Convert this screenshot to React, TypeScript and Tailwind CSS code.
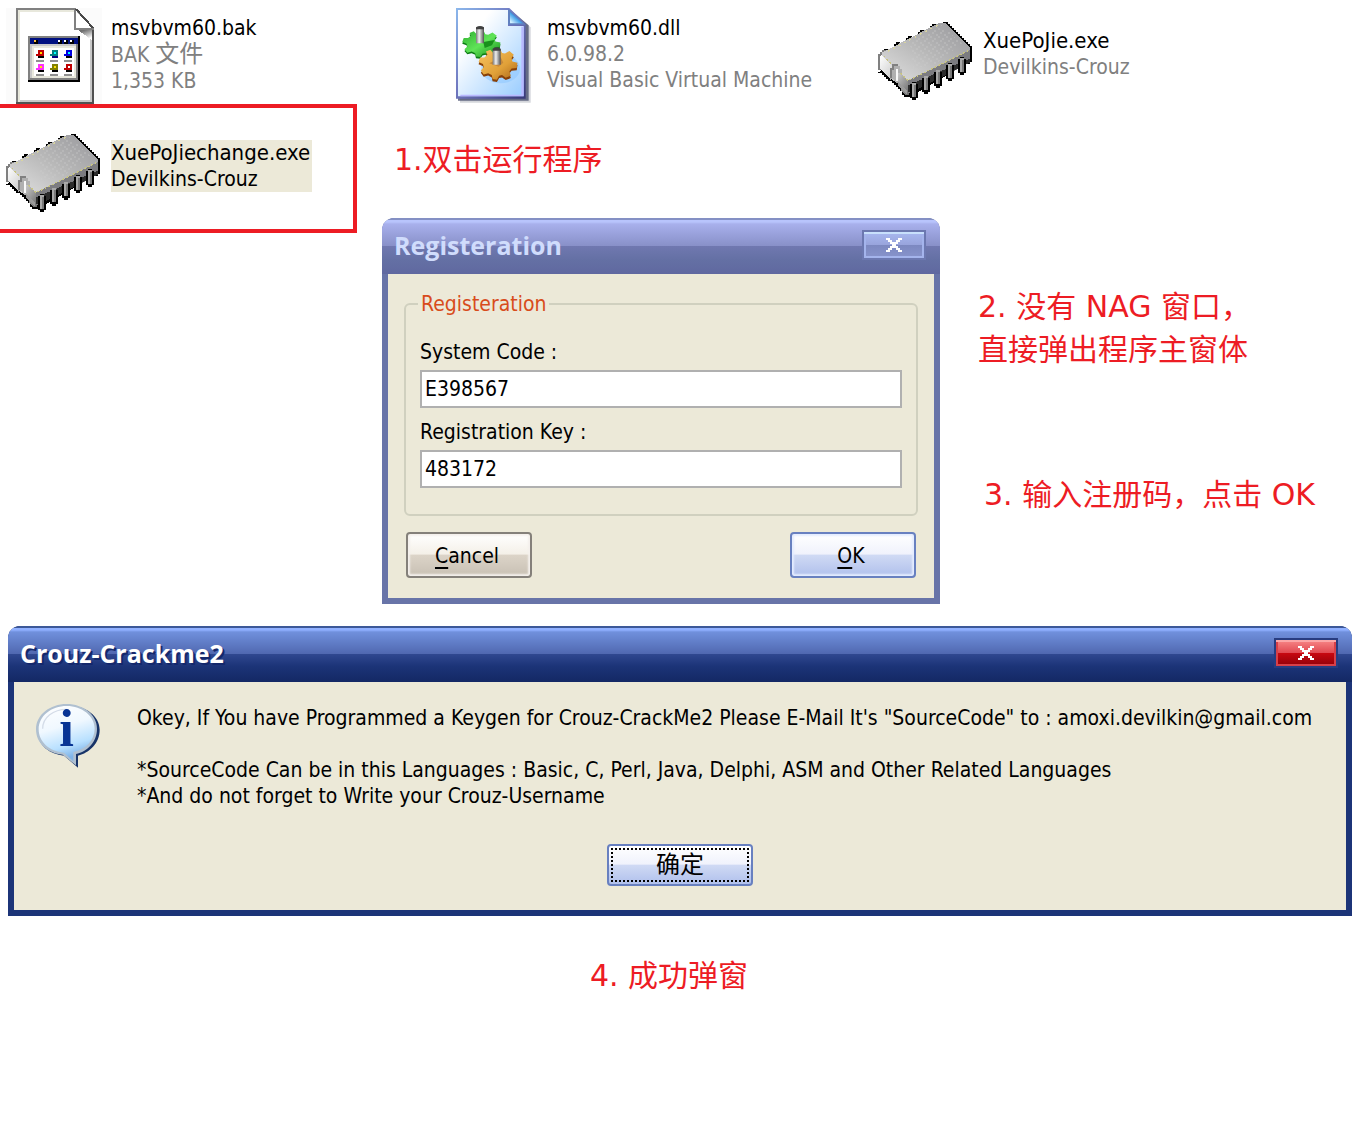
import type { ReactNode } from "react";

function ChipIcon() {
  const pins = [
    [150, 246],
    [186, 227],
    [222, 209],
    [258, 190],
    [294, 172],
  ];
  const bumps = [
    [66, 146],
    [102, 126],
    [138, 108],
    [174, 90],
    [210, 72],
  ];
  return (
    <svg viewBox="54 24 288 288" className="size-24 shrink-0" shapeRendering="crispEdges" aria-hidden="true">
      <defs>
        <linearGradient id="chipTop" x1="0" y1="1" x2="1" y2="0">
          <stop offset="0" stopColor="#e0e0e0" />
          <stop offset="0.5" stopColor="#b8b8b8" />
          <stop offset="1" stopColor="#98989c" />
        </linearGradient>
        <linearGradient id="chipEnd" x1="0" y1="0" x2="1" y2="1">
          <stop offset="0" stopColor="#ffffff" />
          <stop offset="0.55" stopColor="#c8c8c8" />
          <stop offset="1" stopColor="#6a6a6a" />
        </linearGradient>
        <pattern id="chipGrain" width="24" height="24" patternUnits="userSpaceOnUse">
          <path d="M0 0h6v6h-6zM12 6h6v6h-6zM6 18h6v6h-6zM18 12h6v6h-6z" fill="#d0d0d0" opacity="0.3" />
        </pattern>
      </defs>
      {bumps.map(([x, y]) => (
        <path key={x} d={`M${x} ${y + 6}h6v-6h12v6h6v10h-24z`} fill="#000" />
      ))}
      <path d="M252 66h12v6h6v6h6v6h6v6h6v6h6v6h6v6h6v6h6v6h6v6h6v6h6v6h6v48h-6v6h-12L150 290h-18v-6h-6v-12h-6v-6h-6v-6h-6v-6h-6v-6h-6v-6h-12v-6h-6v-6h-6v-6h-6v-6h-12z" fill="#000" />
      <path d="M54 162h6v-6h6v-6h18v20h-14v40h-16z" fill="#808080" />
      <path d="M66 164L146 242V284h-10l-12-12v-12l-12-12-18-10-24-22-10-10v-36z" fill="url(#chipEnd)" />
      <path d="M144 242L330 150V188L150 280h-6z" fill="#7c7c80" />
      <path d="M144 256L330 176V188L156 276h-12z" fill="#2c2c2c" />
      <path d="M66 158L234 70H258L330 144V150L144 242L66 168z" fill="url(#chipTop)" />
      <path d="M150 128L244 76L306 130L230 190L160 206z" fill="url(#chipGrain)" />
      <path d="M72 168L144 242L330 149" fill="none" stroke="#c8c480" strokeWidth="4" strokeDasharray="6 6" />
      <path d="M84 154L240 72" fill="none" stroke="#d8d4a0" strokeWidth="4" strokeDasharray="6 12" />
      <path d="M90 240V204h6v-12h12v6h12v10h6v12h-12v28h-6v-6h-6v-6h-6z" fill="#b0b0b0" />
      <path d="M90 204h6v-12h18v6h-12v12h-6v24h-6z" fill="#808080" />
      <path d="M108 208h6v34h-6z" fill="#f8f8f8" />
      <path d="M114 246L140 270V282L114 258z" fill="#9a9a9a" />
      {pins.map(([x, y]) => (
        <g key={x}>
          <path d={`M${x} ${y + 6}h6v-6h12v6h6v42h-6v6h-12v-6h-6z`} fill="#000" />
          <path d={`M${x + 6} ${y + 2}h12v42h-12z`} fill="#a8a8a8" />
          <path d={`M${x + 12} ${y + 8}h6v36h-6z`} fill="#787878" />
        </g>
      ))}
    </svg>
  );
}

function BakIcon() {
  const marks = [
    [108, 150, "#c00000", "#ffe000", "#000"],
    [150, 150, "#008080", "#00ffff", "#000080"],
    [192, 150, "#0000e0", "#00ffff", "#000"],
    [108, 192, "#ff30ff", "#ffe000", "#000"],
    [150, 192, "#808000", "#ffe000", "#000"],
    [192, 192, "#c00000", "#ffffff", "#000"],
  ] as const;
  return (
    <svg viewBox="18 24 288 288" className="size-24 shrink-0" shapeRendering="crispEdges" aria-hidden="true">
      <defs>
        <linearGradient id="foldShade" x1="0" y1="0" x2="0.5" y2="1">
          <stop offset="0.2" stopColor="#707070" />
          <stop offset="1" stopColor="#ffffff" />
        </linearGradient>
      </defs>
      <path d="M18 24h288v288h-288z" fill="#fbfbfb" />
      <path d="M48 24H228L282 84V312H48z" fill="#808080" />
      <path d="M54 30H222V90H276V306H54z" fill="#e8e8dc" />
      <path d="M60 36H222V90H270V300H60z" fill="#fff" />
      <path d="M270 90h6v216h-216v-6h210z" fill="#c8c8c8" />
      <path d="M276 84h6v228h-234v-6h228z" fill="#505050" />
      <path d="M234 90h42v30z" fill="url(#foldShade)" />
      <path d="M228 30L276 82V84H228z" fill="#fff" />
      <path d="M234 30L276 76V84L228 36z" fill="#b0b0b0" />
      <path d="M222 24h6v60h54v6h-60z" fill="#808080" />
      <path d="M228 27L279 84" stroke="#484848" strokeWidth="6" />
      <path d="M84 108h156v138h-156z" fill="#000" />
      <path d="M84 108h150v132h-150z" fill="#808080" />
      <path d="M90 114h144v18h-144z" fill="#001080" />
      <path d="M90 132h138v102h-138z" fill="#c8c8c8" />
      <path d="M96 138h132v96h-132z" fill="#e8e8dc" />
      <path d="M102 144h120v84h-120z" fill="#fff" />
      <path d="M102 120h12v12h-12zM174 120h12v12h-12zM192 120h12v12h-12zM210 120h12v12h-12z" fill="#000" />
      <path d="M102 120h6v6h-6z" fill="#ffc040" />
      <path d="M174 120h6v6h-6zM192 120h6v6h-6zM210 120h6v6h-6z" fill="#fff" />
      {marks.map(([x, y, body, dot, dark]) => (
        <g key={`${x}-${y}`}>
          <path d={`M${x + 6} ${y + 12}h18v12h-18z`} fill={dark} />
          <path d={`M${x + 6} ${y}h18v18h-24v-6h6z`} fill={body} />
          <path d={`M${x + 12} ${y + 6}h6v6h-6z`} fill={dot} />
          <path d={`M${x} ${y + 30}h24v6h-24z`} fill="#909090" />
        </g>
      ))}
    </svg>
  );
}

function DllIcon() {
  const gear =
    "M-8 -44L8 -44L12 -34L20 -32L32 -40L44 -28L38 -18L40 -8L54 -4L52 12L38 14L32 22L36 36L22 42L12 34L4 36L-2 48L-14 46L-16 34L-26 28L-38 32L-46 20L-38 10L-40 0L-52 -6L-48 -20L-36 -20L-28 -28L-32 -38L-20 -44L-12 -34Z";
  return (
    <svg viewBox="6 24 288 288" className="size-24 shrink-0" aria-hidden="true">
      <defs>
        <linearGradient id="dllPage" x1="0" y1="0" x2="1" y2="1">
          <stop offset="0.25" stopColor="#ffffff" />
          <stop offset="1" stopColor="#98ccff" />
        </linearGradient>
        <linearGradient id="dllEdge" x1="0" y1="0" x2="1" y2="1">
          <stop offset="0" stopColor="#8cb8ec" />
          <stop offset="0.45" stopColor="#7078c0" />
          <stop offset="1" stopColor="#383878" />
        </linearGradient>
        <linearGradient id="dllFold" x1="0" y1="1" x2="1" y2="0">
          <stop offset="0.1" stopColor="#d0f0ff" />
          <stop offset="0.6" stopColor="#1484e0" />
        </linearGradient>
        <linearGradient id="greenGear" x1="0" y1="0" x2="1" y2="1">
          <stop offset="0" stopColor="#30b030" />
          <stop offset="0.5" stopColor="#60e458" />
          <stop offset="1" stopColor="#108818" />
        </linearGradient>
        <linearGradient id="orangeGear" x1="0" y1="0" x2="1" y2="1">
          <stop offset="0" stopColor="#f8c460" />
          <stop offset="0.6" stopColor="#e0a038" />
          <stop offset="1" stopColor="#a86418" />
        </linearGradient>
        <linearGradient id="axle">
          <stop offset="0" stopColor="#787878" />
          <stop offset="0.4" stopColor="#f0f0f0" />
          <stop offset="1" stopColor="#505050" />
        </linearGradient>
      </defs>
      <path d="M60 34H214L272 82V308H60z" fill="#707888" opacity="0.3" />
      <path d="M54 30H212L266 76V302H54z" fill="#404868" opacity="0.75" />
      <path d="M48 24H208L257 72V296H48z" fill="url(#dllEdge)" />
      <path d="M54 30H204V78H251V289H54z" fill="url(#dllPage)" />
      <path d="M244 80h7v209h-190v-5h183z" fill="#b8b8ff" />
      <path d="M204 26L257 74H204z" fill="#6080c0" />
      <path d="M210 36L248 70H210z" fill="url(#dllFold)" />
      <ellipse cx="182" cy="206" rx="58" ry="44" fill="#90c8ff" opacity="0.6" />
      <g transform="translate(123 131) scale(1.08 .84)">
        <path d={gear} fill="#0c7c14" transform="translate(0 6)" />
        <path d={gear} fill="url(#greenGear)" />
      </g>
      <path d="M130 126l34-6-8 16-22 8z" fill="#18901c" />
      <g transform="translate(173 192) scale(1.1 .98)">
        <path d={gear} fill="#884008" transform="translate(0 7)" />
        <path d={gear} fill="url(#orangeGear)" />
      </g>
      <path d="M182 172l8 16-14 12-28-10z" fill="#c88838" />
      <path d="M108 84q12-8 24 0v46h-24z" fill="url(#axle)" />
      <path d="M158 148q12-8 24 0v46h-24z" fill="url(#axle)" />
      <path d="M108 82q12-8 24 0v6h-24zM158 146q12-8 24 0v6h-24z" fill="#404040" />
    </svg>
  );
}

function InfoIcon() {
  return (
    <svg viewBox="108 252 192 192" className="size-16 shrink-0 overflow-visible" aria-hidden="true">
      <defs>
        <linearGradient id="bubble" x1="0" y1="0" x2="0.3" y2="1">
          <stop offset="0" stopColor="#ffffff" />
          <stop offset="0.45" stopColor="#f0f8ff" />
          <stop offset="0.8" stopColor="#b8e0ff" />
          <stop offset="1" stopColor="#80b4e8" />
        </linearGradient>
      </defs>
      <path d="M206 257C258 257 299 288 299 329C299 370 268 398 234 407V443L192 407C150 403 114 378 112 334C112 288 154 257 206 257z" fill="#183468" />
      <path d="M200 252C250 252 291 284 291 326C291 366 262 394 228 402V436L188 404C142 400 108 370 108 328C108 284 150 252 200 252z" fill="#b0c0d0" />
      <path d="M200 258C246 258 284 288 284 326C284 362 256 388 220 396V424L192 398C148 394 116 366 116 328C116 288 154 258 200 258z" fill="url(#bubble)" />
      <path d="M128 326C128 292 160 268 200 268" fill="none" stroke="#d4dce8" strokeWidth="4" />
      <text x="200" y="378" textAnchor="middle" fontFamily="Liberation Serif, serif" fontWeight="700" fontSize="158" fill="#083494">
        i
      </text>
    </svg>
  );
}

function CloseGlyph() {
  return (
    <svg viewBox="0 0 8 7" className="h-3.5 w-4" shapeRendering="crispEdges" aria-hidden="true">
      <path
        d="M0 0h2v1h1v1h2v-1h1v-1h2v1h-1v1h-1v1h-1v1h1v1h1v1h1v1h-2v-1h-1v-1h-2v1h-1v1h-2v-1h1v-1h1v-1h1v-1h-1v-1h-1v-1h-1z"
        fill="#fff"
      />
    </svg>
  );
}

function FileItem({ icon, children }: { icon: ReactNode; children: ReactNode }) {
  return (
    <div className="flex items-center gap-[9px] pl-1.5">
      {icon}
      <div className="mb-1 whitespace-nowrap">{children}</div>
    </div>
  );
}

const noteText = "font-['DejaVu_Sans','Noto_Sans_CJK_SC',sans-serif] text-[30px] leading-[43px] whitespace-nowrap text-[#ed1c24]";

export default function App() {
  return (
    <main className="min-h-screen bg-white font-['DejaVu_Sans_Condensed','Noto_Sans_CJK_SC',sans-serif] text-[21px] leading-[26px] text-black">
      <section className="grid grid-cols-[436fr_436fr_488fr] pt-2">
        <FileItem icon={<BakIcon />}>
          <p>msvbvm60.bak</p>
          <p className="text-[#808080]">BAK <span className="text-2xl leading-[26px]">文件</span></p>
          <p className="text-[#808080]">1,353 KB</p>
        </FileItem>
        <FileItem icon={<DllIcon />}>
          <p>msvbvm60.dll</p>
          <p className="text-[#808080]">6.0.98.2</p>
          <p className="text-[#808080]">Visual Basic Virtual Machine</p>
        </FileItem>
        <FileItem icon={<ChipIcon />}>
          <p className="text-[22px]">XuePoJie.exe</p>
          <p className="text-[#808080]">Devilkins-Crouz</p>
        </FileItem>
      </section>

      <section className="flex items-start">
        <div className="w-[357px] shrink-0 border-4 border-l-0 border-[#ed1c24] pt-3 pb-[13px]">
          <FileItem icon={<ChipIcon />}>
            <div className="bg-[#ece9d8] pr-0.5">
              <p className="text-[22px]">XuePoJiechange.exe</p>
              <p>Devilkins-Crouz</p>
            </div>
          </FileItem>
        </div>

        <div className="grow pl-[25px]">
          <p className={`${noteText} pt-[34px] pb-[37px] pl-3`}>1.双击运行程序</p>
          <div className="flex items-start">
            <div className="w-[558px] shrink-0 overflow-hidden rounded-t-xl bg-[#6874a8]">
              <header className="flex h-14 items-center justify-between border-t-2 border-[#8490c4] bg-[linear-gradient(#b8c4fc_0px,#b8c4fc_2px,#a8b0ec_4px,#8890c8_26px,#7078b0_26px,#6470a4_40px,#6068a0)] pr-3.5 pb-1 pl-3">
                <h2 className="font-['Open_Sans',sans-serif] text-[25px] font-bold text-[#d0dcfc]">Registeration</h2>
                <button type="button" aria-label="Close" className="flex h-[30px] w-16 items-center justify-center border-2 border-[#6c78b0] bg-[linear-gradient(#a8b8f0,#98a4dc_50%,#7c88c0_50%,#8894cc)] shadow-[inset_0_2px_0_#c8e0fc,inset_0_0_0_2px_#a4b4ec]">
                  <CloseGlyph />
                </button>
              </header>
              <form className="mx-1.5 mb-1.5 bg-[#ece9d8] px-4 pt-[17px] pb-5" onSubmit={(e) => e.preventDefault()}>
                <fieldset className="rounded-md border-2 border-[#d0d0bf] px-3.5 pb-[26px]">
                  <legend className="-ml-0.5 px-[3px] text-[#d84c1c]">Registeration</legend>
                  <label htmlFor="code" className="block pt-[22px]">System Code :</label>
                  <input id="code" defaultValue="E398567" className="mt-[5px] block h-[38px] w-full border-2 border-[#b0b0b0] bg-white px-[3px] outline-none" />
                  <label htmlFor="key" className="mt-[11px] block">Registration Key :</label>
                  <input id="key" defaultValue="483172" className="mt-[5px] block h-[38px] w-full border-2 border-[#b0b0b0] bg-white px-[3px] outline-none" />
                </fieldset>
                <div className="mt-4 flex justify-between px-0.5">
                  <button type="button" className="h-[46px] w-[126px] rounded border-2 border-[#84807a] bg-[linear-gradient(#ffffff,#f4f0e8_48%,#dcd4c8_50%,#c8c0b4)] pt-0.5 pr-1 shadow-[inset_0_0_2px_2px_#f4f0ec]">
                    <span className="underline decoration-2 underline-offset-4">C</span>ancel
                  </button>
                  <button type="submit" className="h-[46px] w-[126px] rounded border-2 border-[#6880c0] bg-[linear-gradient(#ffffff,#f0f2fc_48%,#d0daf4_50%,#b0c0ec)] pt-0.5 pr-1 shadow-[inset_0_0_2px_2px_#e4ecff]">
                    <span className="underline decoration-2 underline-offset-4">O</span>K
                  </button>
                </div>
              </form>
            </div>
            <div className="pt-[67px] pl-[38px]">
              <p className={noteText}>2. 没有 NAG 窗口，<br />直接弹出程序主窗体</p>
              <p className={`${noteText} mt-[102px] pl-1.5`}>3. 输入注册码，点击 OK</p>
            </div>
          </div>
        </div>
      </section>

      <section className="mx-2 mt-[22px] overflow-hidden rounded-t-xl bg-[#1c3478]">
        <header className="flex h-14 items-center justify-between border-t-2 border-[#3c5898] bg-[linear-gradient(#90b0ff_0px,#90b0ff_2px,#7090dc_4px,#5068b0_26px,#304890_26px,#1c3478_38px,#142864)] pr-3.5 pb-1 pl-3">
          <h2 className="font-['Open_Sans',sans-serif] text-[25px] font-bold text-white [text-shadow:2px_2px_0_#14286c]">Crouz-Crackme2</h2>
          <button type="button" aria-label="Close" className="flex h-[30px] w-16 items-center justify-center border-2 border-[#283c80] bg-[linear-gradient(#f88888,#e04850_50%,#c80810_50%,#900008)] shadow-[inset_0_2px_0_#fca8a8,inset_0_0_0_2px_#d84048]">
            <CloseGlyph />
          </button>
        </header>
        <div className="mx-1.5 mb-1.5 bg-[#ece9d8] pt-[22px] pb-6">
          <div className="flex gap-[37px] pl-[22px]">
            <InfoIcon />
            <div className="mt-px whitespace-nowrap">
              <p>Okey, If You have Programmed a Keygen for Crouz-CrackMe2 Please E-Mail It's "SourceCode" to : amoxi.devilkin@gmail.com</p>
              <p className="mt-[26px]">*SourceCode Can be in this Languages : Basic, C, Perl, Java, Delphi, ASM and Other Related Languages</p>
              <p>*And do not forget to Write your Crouz-Username</p>
            </div>
          </div>
          <button type="button" className="mx-auto mt-[35px] block h-[42px] w-[146px] rounded border-2 border-[#6880c0] bg-[linear-gradient(#ffffff,#f0f2fc_48%,#d0daf4_50%,#b0c0ec)] p-0.5 text-2xl">
            <span className="flex h-full items-center justify-center border-2 border-dotted border-black leading-[26px]">确定</span>
          </button>
        </div>
      </section>

      <p className={`${noteText} pt-[38px] pr-[22px] text-center`}>4. 成功弹窗</p>
    </main>
  );
}
